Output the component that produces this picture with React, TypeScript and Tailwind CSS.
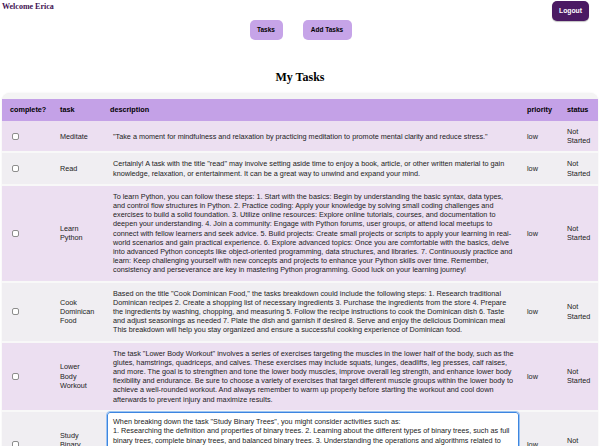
import React from 'react';

const tasks = [
  {
    task: "Meditate",
    description:
      "\"Take a moment for mindfulness and relaxation by practicing meditation to promote mental clarity and reduce stress.\"",
  },
  {
    task: "Read",
    description:
      "Certainly! A task with the title \"read\" may involve setting aside time to enjoy a book, article, or other written material to gain knowledge, relaxation, or entertainment. It can be a great way to unwind and expand your mind.",
  },
  {
    task: "Learn Python",
    description:
      "To learn Python, you can follow these steps: 1. Start with the basics: Begin by understanding the basic syntax, data types, and control flow structures in Python. 2. Practice coding: Apply your knowledge by solving small coding challenges and exercises to build a solid foundation. 3. Utilize online resources: Explore online tutorials, courses, and documentation to deepen your understanding. 4. Join a community: Engage with Python forums, user groups, or attend local meetups to connect with fellow learners and seek advice. 5. Build projects: Create small projects or scripts to apply your learning in real-world scenarios and gain practical experience. 6. Explore advanced topics: Once you are comfortable with the basics, delve into advanced Python concepts like object-oriented programming, data structures, and libraries. 7. Continuously practice and learn: Keep challenging yourself with new concepts and projects to enhance your Python skills over time. Remember, consistency and perseverance are key in mastering Python programming. Good luck on your learning journey!",
  },
  {
    task: "Cook Dominican Food",
    description:
      "Based on the title \"Cook Dominican Food,\" the tasks breakdown could include the following steps: 1. Research traditional Dominican recipes 2. Create a shopping list of necessary ingredients 3. Purchase the ingredients from the store 4. Prepare the ingredients by washing, chopping, and measuring 5. Follow the recipe instructions to cook the Dominican dish 6. Taste and adjust seasonings as needed 7. Plate the dish and garnish if desired 8. Serve and enjoy the delicious Dominican meal This breakdown will help you stay organized and ensure a successful cooking experience of Dominican food.",
  },
  {
    task: "Lower Body Workout",
    description:
      "The task \"Lower Body Workout\" involves a series of exercises targeting the muscles in the lower half of the body, such as the glutes, hamstrings, quadriceps, and calves. These exercises may include squats, lunges, deadlifts, leg presses, calf raises, and more. The goal is to strengthen and tone the lower body muscles, improve overall leg strength, and enhance lower body flexibility and endurance. Be sure to choose a variety of exercises that target different muscle groups within the lower body to achieve a well-rounded workout. And always remember to warm up properly before starting the workout and cool down afterwards to prevent injury and maximize results.",
  },
];

const editing =
  "When breaking down the task \"Study Binary Trees\", you might consider activities such as:\n1. Researching the definition and properties of binary trees. 2. Learning about the different types of binary trees, such as full binary trees, complete binary trees, and balanced binary trees. 3. Understanding the operations and algorithms related to binary trees, like tree traversal, insertion, deletion, and searching. 4. Practicing implementing binary trees in a programming language of your choice. 5. Solving practice problems involving binary trees to reinforce your understanding.";

const Checkbox = () => (
  <div className="ml-[2px] w-[7px] h-[7px] rounded-[2px] border border-[#8d8d8d] bg-white" />
);

const App = () => {
  return (
    <div className="w-[600px] h-[446px] overflow-hidden bg-white">
      {/* Top bar */}
      <div className="flex justify-between items-start px-[2px] h-[20px]">
        <span className="mt-[2px] font-['Liberation_Serif',serif] font-bold text-[8px] leading-[10px] text-[#3e1152]">
          Welcome Erica
        </span>
        <button className="mt-[1px] mr-[9px] w-[37px] h-[20px] rounded-[5px] bg-[#4b1a63] text-white font-['Liberation_Sans',Arial,sans-serif] font-bold text-[6.8px] shadow-[0_1px_1px_rgba(0,0,0,0.25)]">
          Logout
        </button>
      </div>

      {/* Nav */}
      <div className="flex justify-center gap-[20px] font-['Liberation_Sans',Arial,sans-serif]">
        <button className="ml-[1px] w-[33px] h-[20px] rounded-[5px] bg-[#c6a4e8] text-black font-bold text-[6.5px]">
          Tasks
        </button>
        <button className="w-[49px] h-[20px] rounded-[5px] bg-[#c6a4e8] text-black font-bold text-[6.5px]">
          Add Tasks
        </button>
      </div>

      <h1 className="mt-[30px] text-center font-['Liberation_Serif',serif] font-bold text-[12px] leading-[14px] text-black">
        My Tasks
      </h1>

      {/* Table */}
      <div className="mt-[9px] mx-[2px] pt-[6px] rounded-t-[8px] bg-[#f4f4f4] shadow-[0_0_2px_rgba(0,0,0,0.08)]">
        <table className="w-[596px] table-fixed border-collapse font-['Liberation_Sans',Arial,sans-serif] text-[7.25px] leading-[9.2px] text-[#222]">
          <thead>
            <tr className="bg-[#c4a1e7] h-[22px]">
              <th className="w-[50px] pl-[8px] text-left font-bold text-black">complete?</th>
              <th className="w-[54px] pl-[8px] text-left font-bold text-black">task</th>
              <th className="w-[414px] pl-[4px] text-left font-bold text-black">description</th>
              <th className="w-[40px] pl-[7px] text-left font-bold text-black">priority</th>
              <th className="w-[38px] pl-[7px] text-left font-bold text-black">status</th>
            </tr>
          </thead>
          <tbody>
            {tasks.map((t, i) => (
              <tr
                key={i}
                className={`${i % 2 === 0 ? 'bg-[#ecdff1]' : 'bg-[#f0eef2]'} border-b-2 border-[#f8f8f8]`}
              >
                <td className="pl-[8px] py-[6px]">
                  <Checkbox />
                </td>
                <td className="pl-[8px] pr-[8px] py-[6px]">{t.task}</td>
                <td className="pl-[7px] pr-[5px] py-[6px]">{t.description}</td>
                <td className="pl-[7px] py-[6px]">low</td>
                <td className="pl-[7px] py-[6px]">Not Started</td>
              </tr>
            ))}
            <tr className="bg-[#f0eef2]">
              <td className="pl-[8px] py-[6px]">
                <Checkbox />
              </td>
              <td className="pl-[8px] pr-[8px] py-[6px]">Study Binary Trees</td>
              <td className="pl-[1px] pr-[1px] align-top">
                <textarea
                  defaultValue={editing}
                  className="block w-[412px] h-[66px] resize-none overflow-hidden rounded-[3px] border border-[#3d86e0] outline outline-1 outline-[#9cc3f2] bg-white pl-[5px] pr-0 py-[4px] font-['Liberation_Sans',Arial,sans-serif] text-[7.25px] leading-[9.4px] text-[#222]"
                />
              </td>
              <td className="pl-[7px] py-[6px]">low</td>
              <td className="pl-[7px] py-[6px]">Not Started</td>
            </tr>
          </tbody>
        </table>
      </div>
    </div>
  );
};

export default App;
